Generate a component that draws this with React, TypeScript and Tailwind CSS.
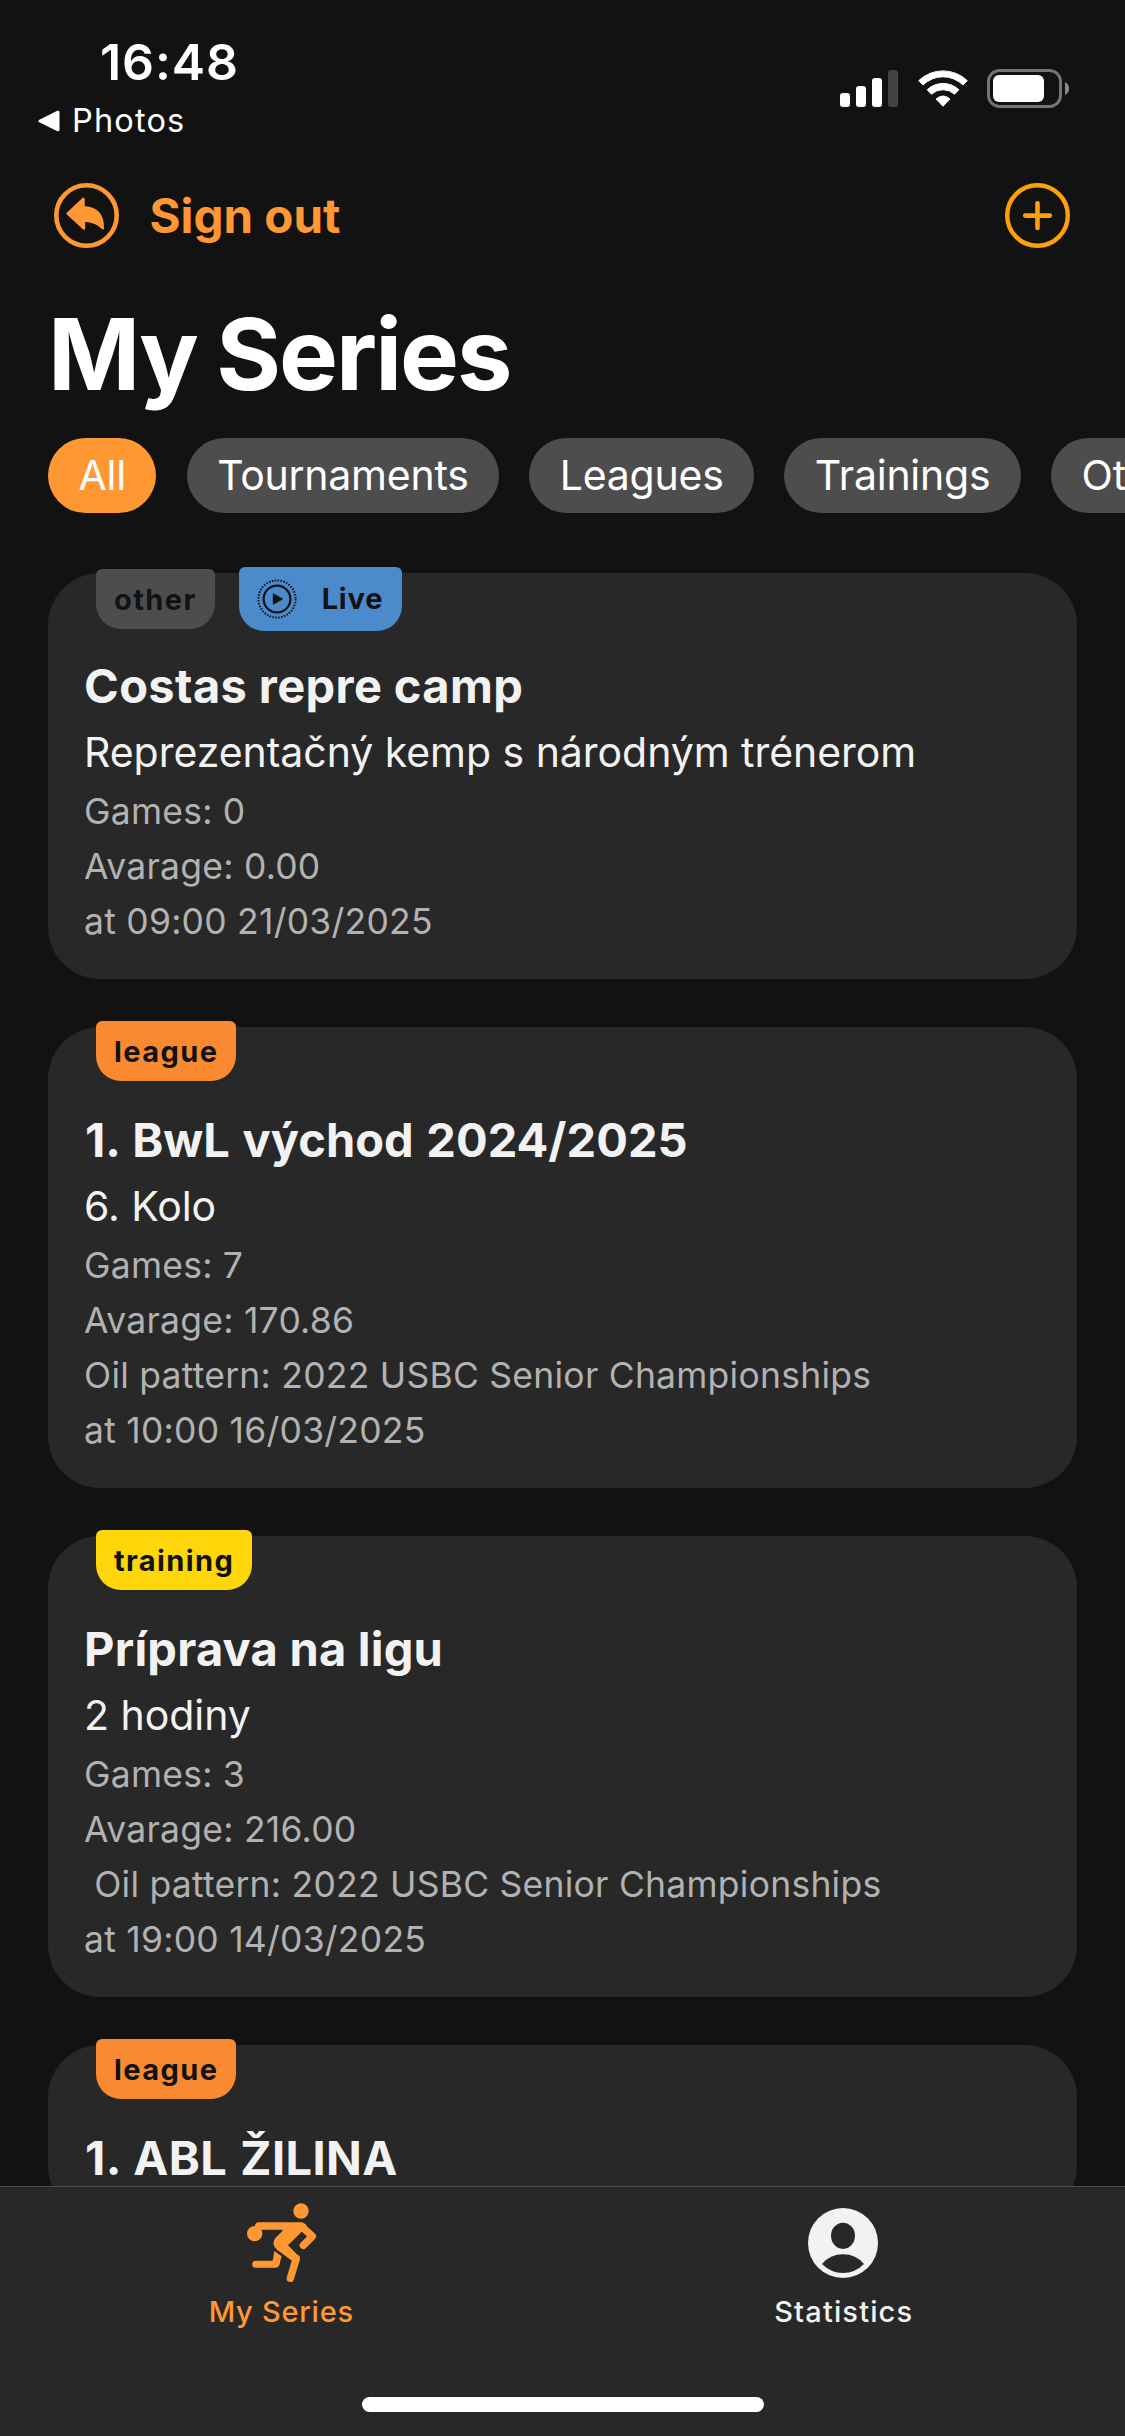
import React from 'react';
import clsx from 'clsx';

type Kind = 'other' | 'league' | 'training';

interface Series {
  kind: Kind;
  live?: boolean;
  title: string;
  tracking: string;
  subtitle?: string;
  meta: string[];
}

const SERIES: Series[] = [
  {
    kind: 'other',
    live: true,
    title: 'Costas repre camp',
    tracking: 'tracking-[0.38px]',
    subtitle: 'Reprezentačný kemp s národným trénerom',
    meta: ['Games: 0', 'Avarage: 0.00', 'at 09:00 21/03/2025'],
  },
  {
    kind: 'league',
    title: '1. BwL východ 2024/2025',
    tracking: 'tracking-[0.02px] pl-px [word-spacing:1.5px]',
    subtitle: '6. Kolo',
    meta: ['Games: 7', 'Avarage: 170.86', 'Oil pattern: 2022 USBC Senior Championships', 'at 10:00 16/03/2025'],
  },
  {
    kind: 'training',
    title: 'Príprava na ligu',
    tracking: 'tracking-[0.22px]',
    subtitle: '2 hodiny',
    meta: ['Games: 3', 'Avarage: 216.00', ' Oil pattern: 2022 USBC Senior Championships', 'at 19:00 14/03/2025'],
  },
  { kind: 'league', title: '1. ABL ŽILINA', tracking: 'tracking-[0.4px] pl-px [word-spacing:1.5px]', meta: [] },
];

const BADGE_COLOR: Record<Kind, string> = {
  other: 'bg-[#4d4d4d]',
  league: 'bg-[#fa8a32]',
  training: 'bg-[#ffd60a]',
};

const FILTERS = ['All', 'Tournaments', 'Leagues', 'Trainings', 'Other'];

function StatusBar() {
  return (
    <div className="flex h-[183px] shrink-0 justify-between pr-[56px] text-white">
      <div className="pt-8">
        <div className="pl-[100px] text-[50px] leading-[60px] font-semibold tracking-[0.9px]">16:48</div>
        <div className="mt-[9px] flex items-center pl-[38px] text-[32.5px] leading-[40px] tracking-[1.15px]">
          <svg className="mr-3 h-[22px] w-[22px]" viewBox="0 0 22 22" fill="currentColor" stroke="currentColor" strokeWidth="3" strokeLinejoin="round">
            <path d="M2 11 20 2.2v17.6Z" />
          </svg>
          Photos
        </div>
      </div>
      <div className="flex items-start pt-[69px]">
        <svg className="mt-px h-[37px] w-[58px]" viewBox="0 0 58 37" fill="currentColor">
          <rect x="0" y="23" width="10" height="14" rx="3" />
          <rect x="16" y="16" width="10" height="21" rx="3" />
          <rect x="32" y="8" width="10" height="29" rx="3" />
          <rect x="48" y="0" width="10" height="37" rx="3" fill="#434343" />
        </svg>
        <svg className="mt-px ml-[19.5px] h-[37px] w-[50px]" viewBox="0 0 50 37" fill="currentColor" stroke="currentColor" strokeWidth="1" strokeLinejoin="round">
          <path d="M.7 10.7A35 35 0 0 1 49.3 10.7L45 15A28.5 28.5 0 0 0 5 15Z" />
          <path d="M9.2 19.7A23 23 0 0 1 40.8 19.7L36.5 24.2A17 17 0 0 0 13.5 24.2Z" />
          <path d="M18 29Q25 23 32 29L25 36.3Z" />
        </svg>
        <svg className="ml-[19.5px] h-[39px] w-[82px]" viewBox="0 0 82 39" fill="none">
          <rect x="1.5" y="1.5" width="72" height="36" rx="11" stroke="#747474" strokeWidth="3" />
          <rect x="6" y="6" width="51" height="27" rx="6" fill="currentColor" />
          <path d="M78 13Q82 15 82 19.5T78 26Z" fill="#8a8a8a" />
        </svg>
      </div>
    </div>
  );
}

function SignOutIcon() {
  return (
    <svg className="size-[65px]" viewBox="0 0 65 65" fill="none" stroke="currentColor">
      <circle cx="32.5" cy="32.5" r="30.2" strokeWidth="4.6" />
      <path
        d="M13.6 30.7 29.5 15.7V24.1C41 24.5 49 30 48.8 45.2Q43 38.5 30 37.5V45.5Z"
        fill="currentColor"
        strokeWidth="2.4"
        strokeLinejoin="round"
      />
    </svg>
  );
}

function AddIcon() {
  return (
    <svg className="size-[65px]" viewBox="0 0 65 65" fill="none" stroke="currentColor" strokeLinecap="round">
      <circle cx="32.5" cy="32.5" r="30.3" strokeWidth="4.4" />
      <path d="M32.5 20.3v24.6M20.2 32.6h24.6" strokeWidth="4.6" />
    </svg>
  );
}

function LiveIcon() {
  return (
    <svg className="size-10" viewBox="0 0 40 40" fill="none" stroke="#121212">
      <circle cx="20" cy="20" r="18.6" strokeWidth="2" strokeDasharray="1.5 1.422" />
      <circle cx="20" cy="20" r="13.4" strokeWidth="2.2" />
      <path d="M16.3 14.8v10.4l9.2-5.2Z" fill="#121212" strokeWidth="1" strokeLinejoin="round" />
    </svg>
  );
}

function BowlerIcon() {
  return (
    <svg className="h-[100px] w-[102px]" viewBox="0 0 306 300" fill="none" stroke="currentColor" strokeLinecap="round" strokeLinejoin="round">
      <g fill="currentColor" stroke="none">
        <circle cx="213" cy="48" r="23" />
        <circle cx="74" cy="116" r="23" />
        <path d="M74 94Q76 82 86 82H212Q222 82 230 90L215 110 174 151 206 183 190 200 141 164Q122 147 137 128L158 107V104H94L97 116Z" />
        <path d="M133 168 155 184 147 212 127 204Z" />
      </g>
      <path d="M214 94 247 124 220 151" strokeWidth="22" />
      <path d="M196 190 199 190 181 250" strokeWidth="22" />
      <path d="M77 208H137L139 202" strokeWidth="21" />
    </svg>
  );
}

function ProfileIcon() {
  return (
    <svg className="mt-[13px] mr-[1.5px] mb-[17px] size-[70px]" viewBox="0 0 70 70">
      <circle cx="35" cy="35" r="35" fill="currentColor" />
      <ellipse cx="35" cy="27.8" rx="12" ry="13.1" fill="#282828" />
      <path d="M14 56Q22 46.3 35 46.3T56 56Q47 65 35 65T14 56Z" fill="#282828" />
    </svg>
  );
}

function SeriesCard({ item }: { item: Series }) {
  return (
    <article className="relative rounded-[52px] bg-[#282828] px-9 pt-[83px] pb-[30px]">
      <div className="absolute -top-1.5 left-12 flex items-center gap-6 text-[29px] font-bold tracking-[1.4px] text-[#121212]">
        <span className={clsx('h-[60px] rounded-t-md rounded-b-[25px] px-[18px] leading-[61px]', BADGE_COLOR[item.kind])}>{item.kind}</span>
        {item.live && (
          <span className="flex h-16 w-[163px] items-center gap-[25px] rounded-t-md rounded-b-[25px] bg-[#4b8acb] pl-[18px] tracking-[0.8px]">
            <LiveIcon />
            Live
          </span>
        )}
      </div>
      <h2 className={clsx('text-[47px] leading-[60px] font-bold text-[#f2f2f2]', item.tracking)}>{item.title}</h2>
      {item.subtitle && <p className="mt-1.5 mb-[2px] text-[41px] leading-[60px] tracking-[-0.04px] text-[#f2f2f2]">{item.subtitle}</p>}
      {item.meta.map((line) => (
        <p key={line} className="text-[35.5px] leading-[55px] tracking-[0.24px] whitespace-pre text-[#b2b2b2]">
          {line}
        </p>
      ))}
    </article>
  );
}

export default function App() {
  return (
    <div className="flex h-[2436px] w-[1125px] flex-col overflow-hidden bg-[#121212] font-['Inter',sans-serif]">
      <StatusBar />
      <header className="flex h-[65px] shrink-0 items-center justify-between pr-[55px] pl-[54px]">
        <button className="flex items-center gap-[30.5px] text-[47.5px] leading-[65px] font-bold text-[#ff9833]">
          <SignOutIcon />
          Sign out
        </button>
        <button className="text-[#ff9f0a]" aria-label="Add series">
          <AddIcon />
        </button>
      </header>
      <h1 className="mt-[46px] shrink-0 pl-12 text-[99px] leading-[120px] font-bold tracking-[-2px] [word-spacing:-2px] text-white">My Series</h1>
      <nav className="mt-6 flex shrink-0 gap-[30.3px] overflow-hidden pl-12">
        {FILTERS.map((name, i) => (
          <button
            key={name}
            className={clsx('h-[75px] shrink-0 rounded-full px-[30.5px] text-[41px] leading-[75px] tracking-[-0.25px] text-white', i === 0 ? 'bg-[#ff9833]' : 'bg-[#4d4d4d]')}
          >
            {name}
          </button>
        ))}
      </nav>
      <main className="flex min-h-0 flex-1 flex-col gap-12 overflow-hidden px-12 pt-[60px]">
        {SERIES.map((item) => (
          <SeriesCard key={item.title} item={item} />
        ))}
      </main>
      <footer className="relative grid h-[250px] shrink-0 grid-cols-2 border-t border-[#4a4a4a] bg-[#282828] pt-2 text-[29px] leading-9 font-medium">
        <div className="flex flex-col items-center text-[#ff9833]">
          <BowlerIcon />
          <span className="-mt-px tracking-[0.75px]">My Series</span>
        </div>
        <div className="flex flex-col items-center text-[#f2f2f2]">
          <ProfileIcon />
          <span className="-mt-px tracking-[1.15px]">Statistics</span>
        </div>
        <div className="absolute bottom-6 left-[362px] h-[15px] w-[402px] rounded-full bg-white" />
      </footer>
    </div>
  );
}
